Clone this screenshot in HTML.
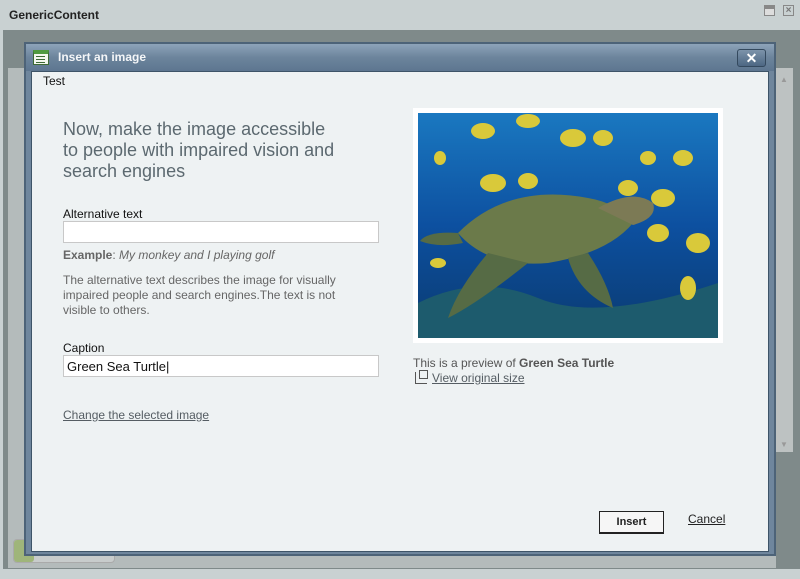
<!DOCTYPE html>
<html><head><meta charset="utf-8"><style>
*{margin:0;padding:0;box-sizing:border-box}
body{width:800px;height:579px;overflow:hidden;background:#c9d1d2;font-family:"Liberation Sans",Arial,sans-serif;position:relative}
.abs{position:absolute}
a{color:#555d63;text-decoration:underline}
</style></head><body>
<div class="abs" style="left:9px;top:8px;font-size:12px;font-weight:bold;color:#222">GenericContent</div>
<div class="abs" style="left:764px;top:5px;width:11px;height:11px;border:1px solid #888;background:#ddd"><div style="height:3px;background:#888"></div></div>
<div class="abs" style="left:783px;top:5px;width:11px;height:11px;border:1px solid #888;color:#777;font-size:10px;line-height:9px;text-align:center;font-weight:bold">×</div>
<div class="abs" style="left:3px;top:30px;width:797px;height:539px;background:#7f8a8a"></div>
<div class="abs" style="left:8px;top:68px;width:22px;height:400px;background:#b4bbbb"></div>
<div class="abs" style="left:776px;top:68px;width:17px;height:384px;background:#bdc2c2"></div>
<div class="abs" style="left:780px;top:75px;color:#999;font-size:8px">▲</div>
<div class="abs" style="left:780px;top:440px;color:#999;font-size:8px">▼</div>
<div class="abs" style="left:8px;top:468px;width:768px;height:100px;background:#b4bbbb"></div>
<div class="abs" style="left:13px;top:539px;width:102px;height:24px;border:1px solid #aaa;border-radius:4px;background:#c8cccc"><div style="width:20px;height:22px;background:#9fb57a;border-radius:3px"></div></div>
<div class="abs" style="left:24px;top:42px;width:752px;height:514px;background:#6f869d;border:2px solid #4d6378"></div>
<div class="abs" style="left:26px;top:44px;width:748px;height:27px;background:linear-gradient(#8da3b9,#6c849c 50%,#5d7690)"></div>
<div class="abs" style="left:33px;top:50px;width:16px;height:15px;background:#f3f7ee;border:1px solid #3d6a35;border-top:4px solid #4f9a3f"><div style="margin:2px 2px;height:1px;background:#3d6a35;box-shadow:0 3px 0 #3d6a35,0 6px 0 #3d6a35;width:9px"></div></div>
<div class="abs" style="left:58px;top:50px;font-size:12px;font-weight:bold;color:#f4f6f8">Insert an image</div>
<div class="abs" style="left:737px;top:49px;width:29px;height:18px;border:1px solid #34495e;border-radius:3px;background:linear-gradient(#7c93aa,#4d6783);color:#fff;font-size:14px;font-weight:bold;text-align:center;line-height:16px">✕</div>
<div class="abs" style="left:31px;top:71px;width:738px;height:481px;background:#eef2f3;border:1px solid #3e5468"></div>
<div class="abs" style="left:43px;top:74px;font-size:12px;color:#111">Test</div>
<div class="abs" style="left:63px;top:119px;font-size:18px;line-height:21px;color:#5c6970;width:275px">Now, make the image accessible to people with impaired vision and search engines</div>
<div class="abs" style="left:63px;top:207px;font-size:12px;color:#111">Alternative text</div>
<div class="abs" style="left:63px;top:221px;width:316px;height:22px;background:#fff;border:1px solid #c8c8c8"></div>
<div class="abs" style="left:63px;top:248px;font-size:12px;color:#666"><b>Example</b>: <i>My monkey and I playing golf</i></div>
<div class="abs" style="left:63px;top:273px;font-size:12px;line-height:15px;color:#666;width:300px">The alternative text describes the image for visually impaired people and search engines.The text is not visible to others.</div>
<div class="abs" style="left:63px;top:341px;font-size:12px;color:#111">Caption</div>
<div class="abs" style="left:63px;top:355px;width:316px;height:22px;background:#fff;border:1px solid #c8c8c8;font-size:13px;padding:3px 3px;color:#111">Green Sea Turtle|</div>
<div class="abs" style="left:63px;top:408px;font-size:12px"><a>Change the selected image</a></div>
<div class="abs" style="left:413px;top:108px;width:310px;height:235px;background:#fff;padding:5px">
<svg width="300" height="225" viewBox="0 0 300 225">
<defs><linearGradient id="w" x1="0" y1="0" x2="0" y2="1"><stop offset="0" stop-color="#1a78c0"/><stop offset=".5" stop-color="#0d50a0"/><stop offset="1" stop-color="#0a3a70"/></linearGradient></defs>
<rect width="300" height="225" fill="url(#w)"/>
<path d="M0 190 Q60 160 120 185 T300 170 V225 H0Z" fill="#1d5b6d"/>
<g fill="#d9c93a">
<ellipse cx="65" cy="18" rx="12" ry="8"/><ellipse cx="110" cy="8" rx="12" ry="7"/><ellipse cx="155" cy="25" rx="13" ry="9"/><ellipse cx="185" cy="25" rx="10" ry="8"/><ellipse cx="230" cy="45" rx="8" ry="7"/><ellipse cx="265" cy="45" rx="10" ry="8"/><ellipse cx="22" cy="45" rx="6" ry="7"/><ellipse cx="75" cy="70" rx="13" ry="9"/><ellipse cx="110" cy="68" rx="10" ry="8"/><ellipse cx="210" cy="75" rx="10" ry="8"/><ellipse cx="245" cy="85" rx="12" ry="9"/><ellipse cx="240" cy="120" rx="11" ry="9"/><ellipse cx="280" cy="130" rx="12" ry="10"/><ellipse cx="270" cy="175" rx="8" ry="12"/><ellipse cx="20" cy="150" rx="8" ry="5"/></g>
<path d="M40 120 Q90 70 170 85 Q200 90 215 110 Q190 140 130 150 Q70 155 40 120Z" fill="#6b7a4a"/>
<path d="M180 95 Q215 75 235 90 Q240 105 215 112Z" fill="#7c7a55"/>
<path d="M70 140 Q40 175 30 205 Q60 190 110 150Z" fill="#566b45"/>
<path d="M150 145 Q160 180 195 195 Q190 170 170 140Z" fill="#566b45"/>
<path d="M40 120 Q10 118 2 128 Q20 135 45 130Z" fill="#566b45"/>
</svg></div>
<div class="abs" style="left:413px;top:356px;font-size:12px;color:#555">This is a preview of <b>Green Sea Turtle</b></div>
<div class="abs" style="left:415px;top:372px;width:12px;height:12px;border:1px solid #555;border-top:none;border-right:none"></div>
<div class="abs" style="left:419px;top:370px;width:9px;height:9px;border:1px solid #555;background:#eef2f3"></div>
<div class="abs" style="left:432px;top:371px;font-size:12px"><a>View original size</a></div>
<div class="abs" style="left:599px;top:511px;width:65px;height:23px;border:1px solid #222;border-bottom:2px solid #222;background:#f6f6f6;font-size:11px;font-weight:bold;text-align:center;line-height:20px;color:#222">Insert</div>
<div class="abs" style="left:688px;top:512px;font-size:12px"><a style="color:#222">Cancel</a></div>
</body></html>
